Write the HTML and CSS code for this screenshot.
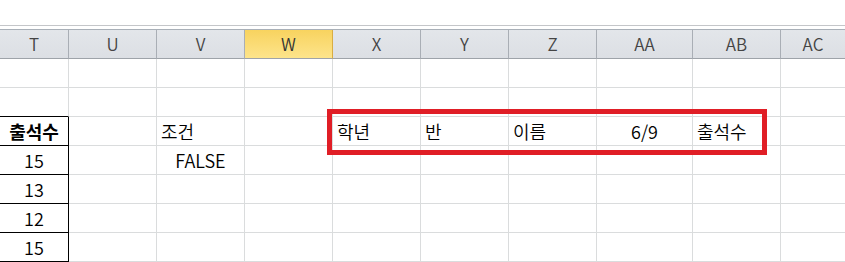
FILE: index.html
```html
<!doctype html>
<html>
  <head>
    <title>Sheet</title>
    <meta charset="utf-8" />
    <link rel="stylesheet" href="styles.css">
  </head>
  <body>
    <div class="ribbon-edge"></div>
    <div class="sheet">
      <div class="head">T</div>
      <div class="head">U</div>
      <div class="head">V</div>
      <div class="head selected">W</div>
      <div class="head">X</div>
      <div class="head">Y</div>
      <div class="head">Z</div>
      <div class="head">AA</div>
      <div class="head">AB</div>
      <div class="head last">AC</div>

      <div class="cell"></div><div class="cell"></div><div class="cell"></div><div class="cell"></div><div class="cell"></div>
      <div class="cell"></div><div class="cell"></div><div class="cell"></div><div class="cell"></div><div class="cell last"></div>

      <div class="cell boxed-below"></div><div class="cell"></div><div class="cell"></div><div class="cell"></div><div class="cell"></div>
      <div class="cell"></div><div class="cell"></div><div class="cell"></div><div class="cell"></div><div class="cell last"></div>

      <div class="cell boxed center bold">출석수</div>
      <div class="cell"></div>
      <div class="cell">조건</div>
      <div class="cell"></div>
      <div class="cell">학년</div>
      <div class="cell">반</div>
      <div class="cell">이름</div>
      <div class="cell center">6/9</div>
      <div class="cell">출석수</div>
      <div class="cell last"></div>

      <div class="cell boxed center">15</div>
      <div class="cell"></div>
      <div class="cell center">FALSE</div>
      <div class="cell"></div><div class="cell"></div><div class="cell"></div><div class="cell"></div><div class="cell"></div><div class="cell"></div><div class="cell last"></div>

      <div class="cell boxed center">13</div>
      <div class="cell"></div><div class="cell"></div><div class="cell"></div><div class="cell"></div><div class="cell"></div><div class="cell"></div><div class="cell"></div><div class="cell"></div><div class="cell last"></div>

      <div class="cell boxed center">12</div>
      <div class="cell"></div><div class="cell"></div><div class="cell"></div><div class="cell"></div><div class="cell"></div><div class="cell"></div><div class="cell"></div><div class="cell"></div><div class="cell last"></div>

      <div class="cell boxed center">15</div>
      <div class="cell"></div><div class="cell"></div><div class="cell"></div><div class="cell"></div><div class="cell"></div><div class="cell"></div><div class="cell"></div><div class="cell"></div><div class="cell last"></div>

      <div class="highlight"></div>
    </div>
  </body>
</html>
```

FILE: styles.css
```css
body {
  margin: 0;
  background: #fff;
  font-family: "Noto Sans CJK KR", "Noto Sans", sans-serif;
  color: #000;
  overflow: hidden;
}
.ribbon-edge {
  height: 25px;
  border-bottom: 1px solid #c4c6c9;
  margin-bottom: 3px;
}
.sheet {
  position: relative;
  display: grid;
  grid-template-columns: 69px 88px 88px 88px 88px 88px 88px 96px 88px 1fr;
  grid-auto-rows: 29px;
  border-top: 1px solid #a9b0b8;
}
.head {
  height: 29px;
  box-sizing: border-box;
  background: linear-gradient(#e3e6ea, #dcdfe4);
  border-right: 1px solid #a9aeb5;
  border-bottom: 1px solid #9ea3a9;
  color: #444;
  font-size: 17px;
  font-weight: 350;
  line-height: 28px;
  text-align: center;
}
.head.selected {
  background: linear-gradient(#f8d35f, #fde48b);
  border-right-color: #d9ad42;
  color: #333;
}
.cell {
  box-sizing: border-box;
  border-right: 1px solid #dadcdd;
  border-bottom: 1px solid #dadcdd;
  font-size: 18px;
  font-weight: 350;
  line-height: 28px;
  padding: 0 4px;
  white-space: nowrap;
}
.last {
  border-right: none;
}
.center {
  text-align: center;
}
.cell.bold {
  font-weight: 700;
}
.boxed {
  border-right-color: #000;
  border-bottom-color: #000;
}
.boxed-below {
  border-bottom-color: #000;
}
.highlight {
  position: absolute;
  left: 327px;
  top: 79px;
  width: 440px;
  height: 46px;
  box-sizing: border-box;
  border: 5px solid #e01e26;
}
```
